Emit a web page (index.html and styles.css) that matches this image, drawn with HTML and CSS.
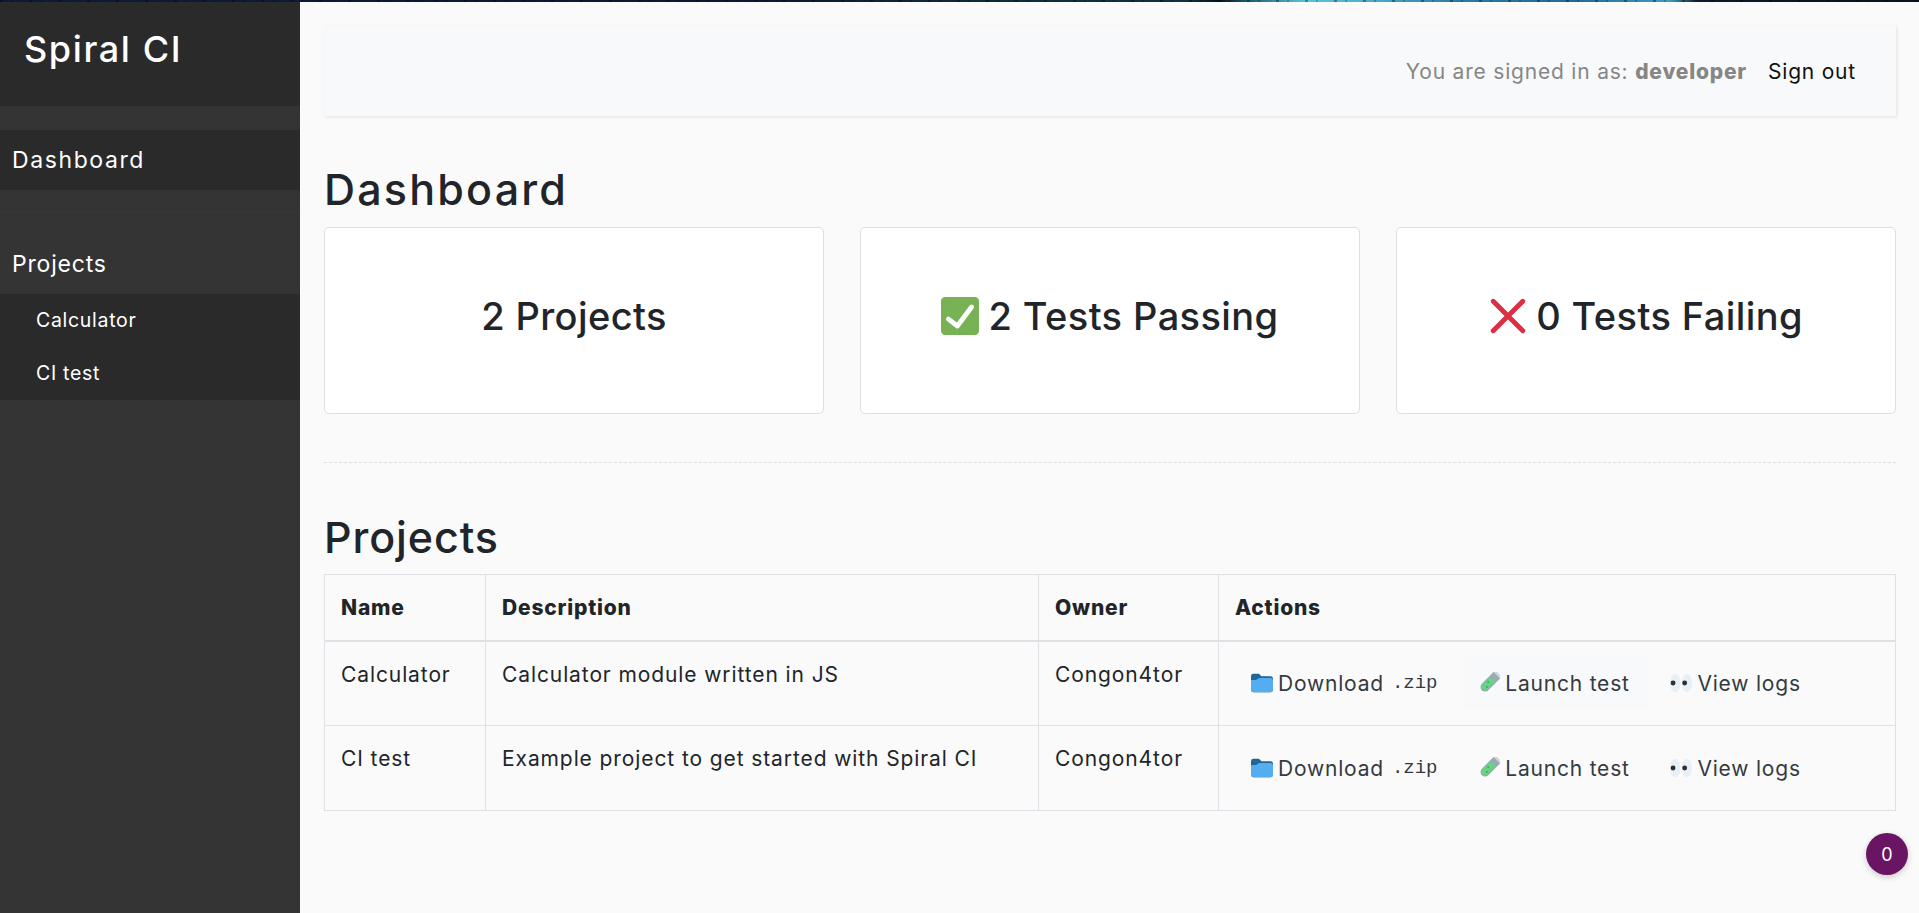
FILE: index.html
```html
<!DOCTYPE html>
<html lang="en">
<head>
<meta charset="utf-8">
<title>Spiral CI</title>
<link rel="stylesheet" href="styles.css">
</head>
<body>
<div class="strip"></div>
<div class="layout">
  <aside class="sidebar">
    <div class="brand">Spiral CI</div>
    <nav class="nav">
      <a class="nav-main">Dashboard</a>
      <div class="nav-group">
        <div class="nav-label">Projects</div>
        <ul class="nav-sub">
          <li>Calculator</li>
          <li>CI test</li>
        </ul>
      </div>
    </nav>
  </aside>
  <main class="content">
    <header class="topbar">
      <span class="signed">You are signed in as: <b>developer</b></span>
      <a class="signout">Sign out</a>
    </header>
    <h1 class="heading first">Dashboard</h1>
    <section class="cards">
      <div class="card">2 Projects</div>
      <div class="card">
        <svg class="card-icon" viewBox="0 0 36 36"><rect x="0" y="0" width="36" height="36" rx="4" fill="#77b255"/><path d="M7 21l8.500 6.500L29 9.500" fill="none" stroke="#fff" stroke-width="4.600" stroke-linecap="round" stroke-linejoin="round"/></svg>
        2 Tests Passing
      </div>
      <div class="card">
        <svg class="card-icon" viewBox="0 0 36 36"><path d="M4 4l28 28M32 4L4 32" fill="none" stroke="#dd2e44" stroke-width="4.600" stroke-linecap="round"/></svg>
        0 Tests Failing
      </div>
    </section>
    <hr class="divider">
    <h1 class="heading second">Projects</h1>
    <table class="table">
      <colgroup><col class="c1"><col class="c2"><col class="c3"><col class="c4"></colgroup>
      <thead>
        <tr><th>Name</th><th>Description</th><th>Owner</th><th>Actions</th></tr>
      </thead>
      <tbody>
        <tr>
          <td>Calculator</td>
          <td>Calculator module written in JS</td>
          <td>Congon4tor</td>
          <td class="actions">
            <a class="btn"><svg class="ico" viewBox="0 0 36 36"><path d="M0 29a4 4 0 0 0 4 4h28a4 4 0 0 0 4-4V11a4 4 0 0 0-4-4H17L13 3H4a4 4 0 0 0-4 4z" fill="#226699"/><path d="M0 29a4 4 0 0 0 4 4h28a4 4 0 0 0 4-4V14a4 4 0 0 0-4-4H14c-3 0-3 3-6 3H0z" fill="#55acee"/></svg>Download <code>.zip</code></a>
            <a class="btn hover"><svg class="ico" viewBox="0 0 36 36"><g transform="rotate(45 18 18)"><path d="M10.500-1h15v28a7.500 7.500 0 0 1-15 0z" fill="#99aab5"/><path d="M13 9h10v18a5 5 0 0 1-10 0z" fill="#5fd97c"/><circle cx="16" cy="18" r="1.300" fill="#2a9d54"/><circle cx="20" cy="25" r="1.300" fill="#2a9d54"/><rect x="8.500" y="-4" width="19" height="4" rx="2" fill="#ccd6dd"/></g></svg>Launch test</a>
            <a class="btn"><svg class="ico" viewBox="0 0 36 36"><ellipse cx="8.500" cy="18" rx="8.500" ry="15" fill="#e8eff5"/><ellipse cx="27.500" cy="18" rx="8.500" ry="15" fill="#e8eff5"/><circle cx="5" cy="18" r="4" fill="#292f33"/><circle cx="24" cy="18" r="4" fill="#292f33"/></svg>View logs</a>
          </td>
        </tr>
        <tr>
          <td>CI test</td>
          <td>Example project to get started with Spiral CI</td>
          <td>Congon4tor</td>
          <td class="actions">
            <a class="btn"><svg class="ico" viewBox="0 0 36 36"><path d="M0 29a4 4 0 0 0 4 4h28a4 4 0 0 0 4-4V11a4 4 0 0 0-4-4H17L13 3H4a4 4 0 0 0-4 4z" fill="#226699"/><path d="M0 29a4 4 0 0 0 4 4h28a4 4 0 0 0 4-4V14a4 4 0 0 0-4-4H14c-3 0-3 3-6 3H0z" fill="#55acee"/></svg>Download <code>.zip</code></a>
            <a class="btn"><svg class="ico" viewBox="0 0 36 36"><g transform="rotate(45 18 18)"><path d="M10.500-1h15v28a7.500 7.500 0 0 1-15 0z" fill="#99aab5"/><path d="M13 9h10v18a5 5 0 0 1-10 0z" fill="#5fd97c"/><circle cx="16" cy="18" r="1.300" fill="#2a9d54"/><circle cx="20" cy="25" r="1.300" fill="#2a9d54"/><rect x="8.500" y="-4" width="19" height="4" rx="2" fill="#ccd6dd"/></g></svg>Launch test</a>
            <a class="btn"><svg class="ico" viewBox="0 0 36 36"><ellipse cx="8.500" cy="18" rx="8.500" ry="15" fill="#e8eff5"/><ellipse cx="27.500" cy="18" rx="8.500" ry="15" fill="#e8eff5"/><circle cx="5" cy="18" r="4" fill="#292f33"/><circle cx="24" cy="18" r="4" fill="#292f33"/></svg>View logs</a>
          </td>
        </tr>
      </tbody>
    </table>
    <div class="badge">0</div>
  </main>
</div>
</body>
</html>
```
FILE: styles.css
```css
* { box-sizing: border-box; }
html, body { margin: 0; height: 100%; overflow: hidden; }
body {
  font-family: "Inter", "Noto Sans", sans-serif;
  font-size: 18px;
  color: #212529;
  background: #fafafa;
  display: flex;
  flex-direction: column;
}
.strip {
  height: 2px;
  flex: none;
  background:
    repeating-linear-gradient(90deg, rgba(0,0,0,.35) 0 3px, transparent 3px 11px, rgba(0,0,0,.2) 11px 13px, transparent 13px 29px),
    linear-gradient(90deg, #0c1c38 0%, #0b1a30 40%, #0f2c3c 52%, #123040 62%, #06101c 63.500%, #1c5a74 65%, #5cc4dc 68%, #4fb0d0 71%, #2a7ca4 76%, #1f6c98 82%, #3f9cc0 87%, #0c1a2a 88.500%, #0a1220 100%);
}
.layout { flex: 1; display: flex; min-height: 0; }
.sidebar { width: 300px; flex: none; background: #343434; color: #fff; }
.brand {
  height: 104px;
  background: #2a2a2a;
  padding: 24px 24px;
  font-size: 36px;
  line-height: 46px;
  font-weight: 500;
  letter-spacing: 1.6px;
}
.nav { padding-top: 24px; }
.nav-main {
  display: block;
  height: 60px;
  line-height: 60px;
  padding-left: 12px;
  background: #2a2a2a;
  font-size: 23px;
  letter-spacing: 1.6px;
}
.nav-group { margin-top: 21px; border-top: 1px solid #383838; padding-top: 25px; }
.nav-label {
  height: 54px;
  line-height: 54px;
  margin-bottom: 3px;
  padding-left: 12px;
  font-size: 23px;
  letter-spacing: 0.8px;
}
.nav-sub { list-style: none; margin: 0; padding: 0; background: #2a2a2a; }
.nav-sub li {
  height: 53px;
  line-height: 53px;
  padding-left: 36px;
  font-size: 19.500px;
  letter-spacing: 0.7px;
}
.content { flex: 1; min-width: 0; padding: 24px 23px 0 24px; position: relative; }
.topbar {
  height: 90px;
  background: #f8f9fa;
  box-shadow: 1px 1px 3px rgba(0,0,0,.1);
  display: flex;
  align-items: center;
  justify-content: flex-end;
  gap: 21px;
  padding-right: 40px;
  font-size: 21px;
  letter-spacing: 0.8px;
}
.signed { color: #868686; }
.signed b { font-weight: 800; }
.signout { color: #111; }
.heading {
  margin: 0;
  font-size: 43px;
  font-weight: 500;
  line-height: 60px;
}
.first { margin-top: 43px; margin-bottom: 8px; letter-spacing: 2.2px; }
.second { margin-bottom: 7px; letter-spacing: 0.9px; }
.cards { display: flex; gap: 36px; }
.card {
  flex: 1;
  height: 187px;
  padding-bottom: 10px;
  background: #fff;
  border: 1px solid #dfdfdf;
  border-radius: 5px;
  display: flex;
  align-items: center;
  justify-content: center;
  gap: 9px;
  font-size: 38px;
  font-weight: 500;
  letter-spacing: 0.4px;
}
.card-icon { width: 38px; height: 38px; }
.divider { border: 0; border-top: 1px dashed #dfdfdf; margin: 48px 0 44px; }
.table { width: 100%; border-collapse: collapse; table-layout: fixed; font-size: 21px; letter-spacing: 0.9px; }
.c1 { width: 161px; }
.c2 { width: 553px; }
.c3 { width: 180px; }
.table th, .table td { border: 1px solid #dee2e6; padding: 16px; text-align: left; vertical-align: top; }
.table th { height: 66px; padding-top: 16px; border-bottom-width: 2px; vertical-align: middle; font-weight: 800; letter-spacing: 0.8px; }
.table td { height: 85px; padding-top: 20px; }
.table td.actions { padding: 0 16px 0 18px; vertical-align: middle; white-space: nowrap; letter-spacing: 0.8px; }
.btn {
  display: inline-flex;
  align-items: center;
  height: 52px;
  padding: 0 18px 0 14px;
  margin-right: 2px;
  color: #343a40;
  border-radius: 5px;
}
.btn.hover { background: #f8f9fa; }
.ico { width: 22px; height: 22px; margin-right: 5px; flex: none; }
code { font-family: "Liberation Mono", monospace; font-size: 19px; letter-spacing: 0; margin-left: 8px; }
.badge {
  position: absolute;
  right: 11px;
  bottom: 38px;
  width: 42px;
  height: 42px;
  border-radius: 50%;
  background: #6a1464;
  color: #fff;
  font-size: 18px;
  letter-spacing: 0;
  display: flex;
  align-items: center;
  justify-content: center;
  box-shadow: 0 2px 6px rgba(0,0,0,.2);
}
```
